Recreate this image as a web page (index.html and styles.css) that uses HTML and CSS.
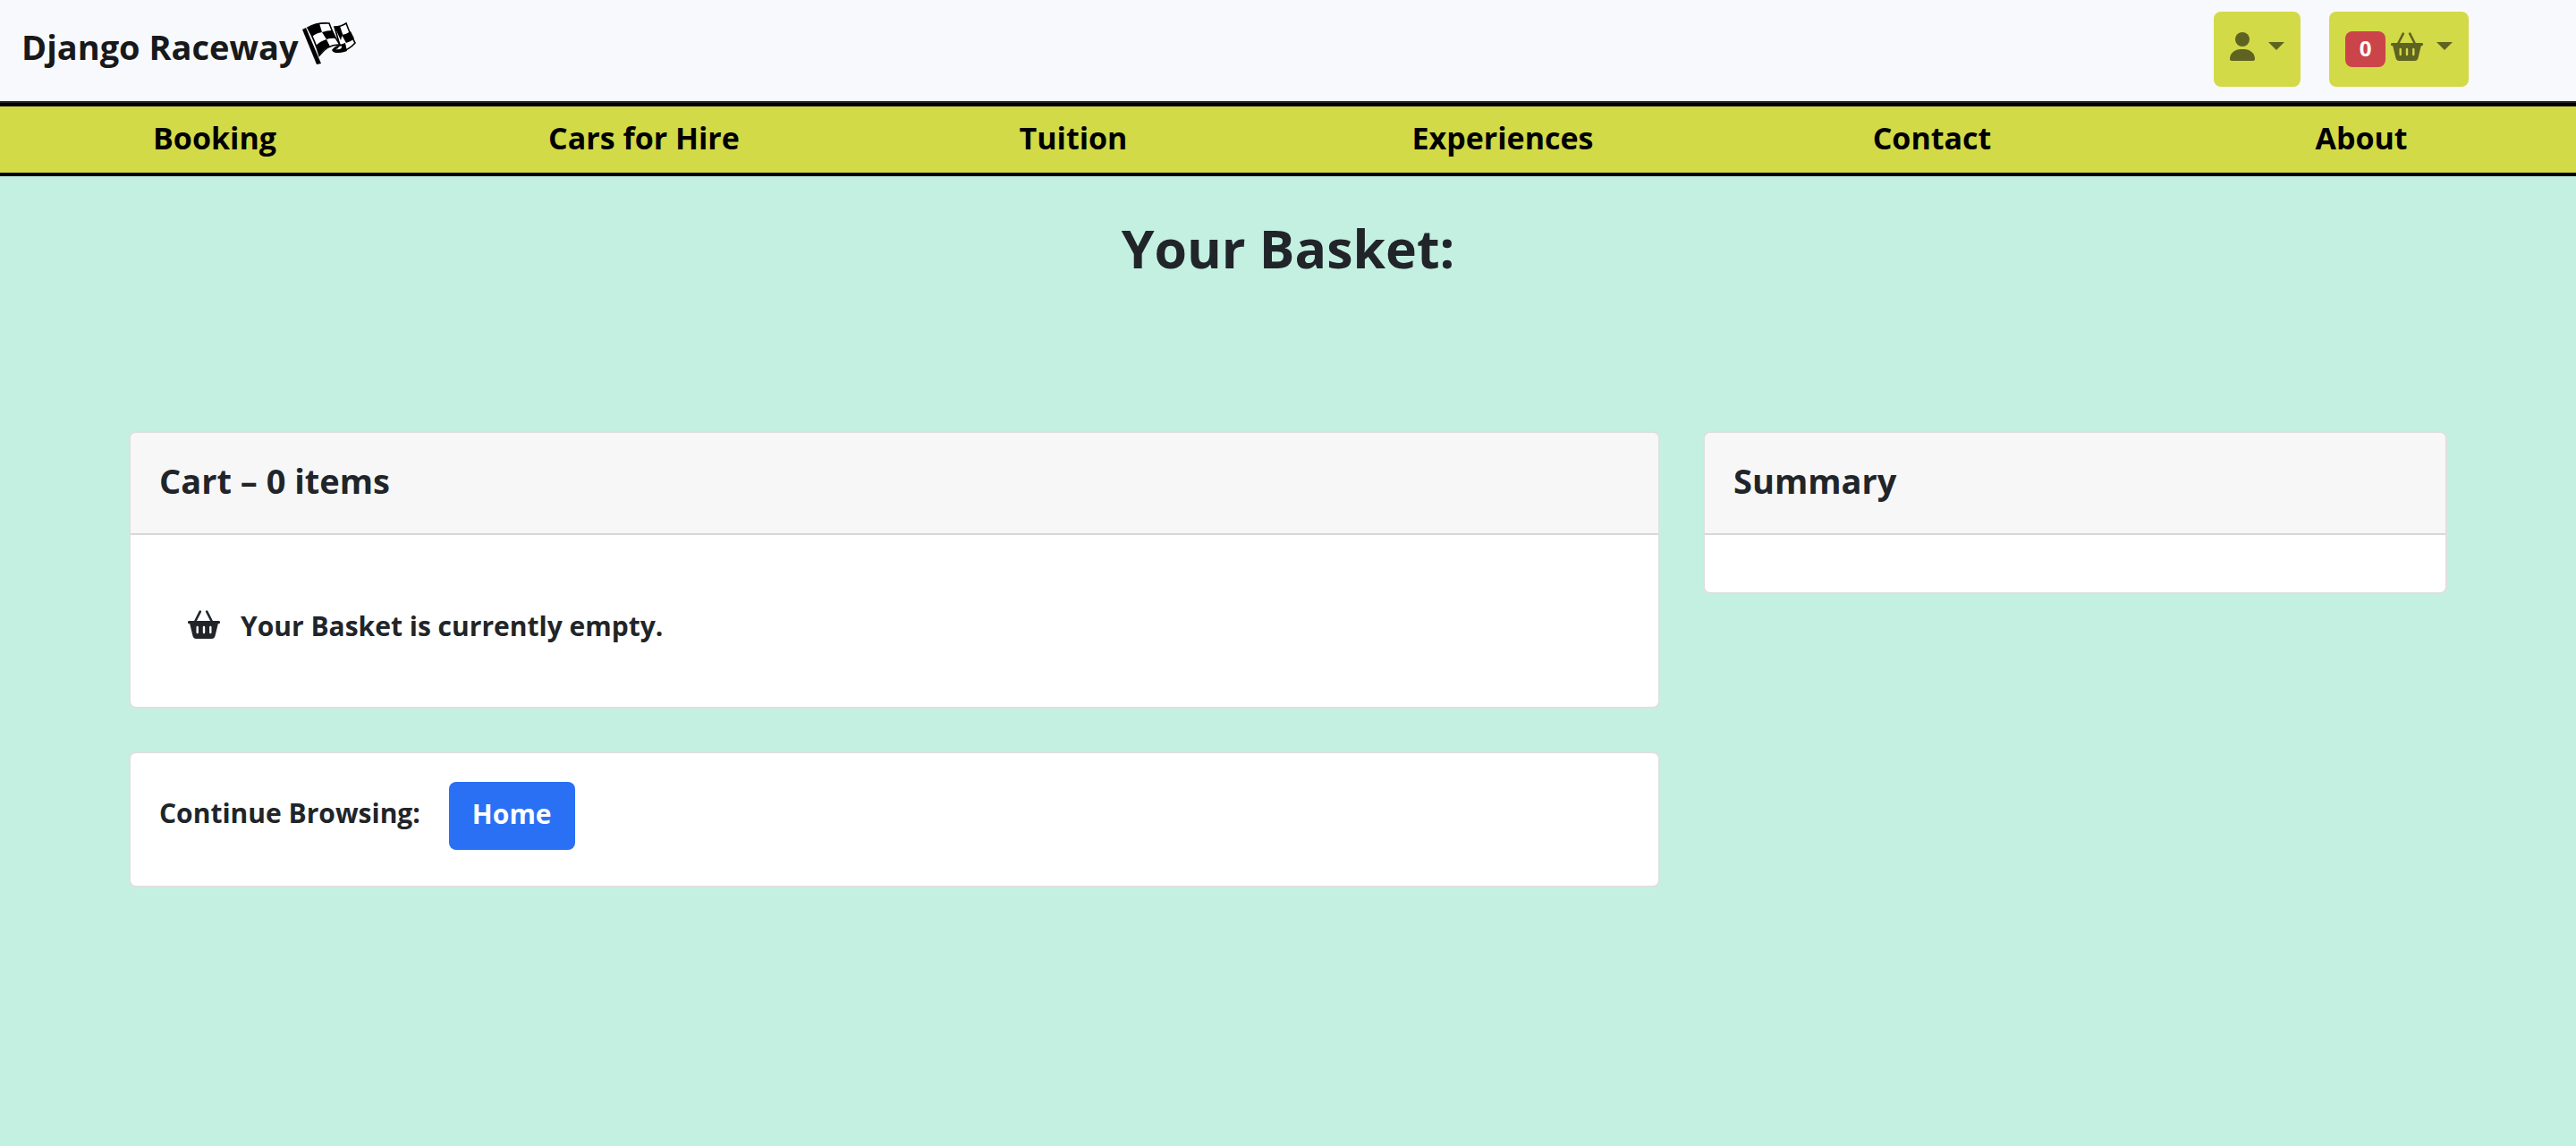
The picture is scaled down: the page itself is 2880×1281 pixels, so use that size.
FILE: index.html
```html
<!DOCTYPE html>
<html lang="en">
<head>
<meta charset="utf-8">
<meta name="viewport" content="width=device-width, initial-scale=1">
<title>Django Raceway</title>
<link rel="stylesheet" href="styles.css">
</head>
<body>
<svg class="sprite" aria-hidden="true">
  <symbol id="basket" viewBox="0 0 36 32">
    <path d="M13.8 1.6 8 13M21.2 1.6 27 13" fill="none" stroke="currentColor" stroke-width="2.6" stroke-linecap="round"/>
    <path fill="currentColor" fill-rule="evenodd" d="M1.5 12h33a1.5 1.5 0 0 1 0 3.2h-.7l-3.2 13.4c-.6 2.4-1.6 3.4-3.8 3.4H9.2c-2.2 0-3.2-1-3.800-3.400L2.200 15.200h-.7a1.500 1.500 0 0 1 0-3.200zM9.500 19v6a1.200 1.200 0 0 0 2.400 0v-6a1.200 1.200 0 0 0-2.400 0zM16.800 19v6a1.200 1.200 0 0 0 2.400 0v-6a1.200 1.200 0 0 0-2.400 0zM24.100 19v6a1.200 1.200 0 0 0 2.400 0v-6a1.200 1.200 0 0 0-2.400 0z"/>
  </symbol>
</svg>
<header class="topbar">
  <a class="brand" href="#">Django Raceway
    <svg class="flag" viewBox="0 0 62 50" aria-hidden="true">
      <path class="cloth" d="M36 5q7 0 13-4 4 12 10 22-7 8-17 10-6 1-8-2 3-4 8-5z"/>
      <path d="M36 5l6-1 3 9-2 7zM44 14q6-1 10-4l4 8q-4 4-9 5zM42 25l6-2 2 9q-9 4-16-1 0-3 7-4-1 3-4 3 7 1 7-3z"/>
      <path class="cloth" d="M6 6Q16 0 30 1q5 14 12 24-13-1-23 12Q14 20 6 6z"/>
      <path d="M6 6Q12 3 19 1l3 10q-7 1-11 5zM22 11q6-2 11-2l5 9q-6-1-11 1zM15 26q5-5 12-7l4 8q-7 2-12 10z"/>
      <path d="M0 8 4 6 21 46l-5 1z"/>
    </svg>
  </a>
  <div class="tools">
    <button class="tool" type="button" aria-label="Account">
      <svg class="person" viewBox="0 0 28 32" aria-hidden="true"><circle cx="14" cy="8" r="8"/><path d="M0 30C0 23 6 19 12 19h4c6 0 12 4 12 11q0 2-2 2H2q-2 0-2-2z"/></svg>
      <span class="caret"></span>
    </button>
    <button class="tool" type="button" aria-label="Basket">
      <span class="badge">0</span>
      <svg class="basket" aria-hidden="true"><use href="#basket"/></svg>
      <span class="caret"></span>
    </button>
  </div>
</header>
<nav class="menu">
  <a href="#">Booking</a>
  <a href="#">Cars for Hire</a>
  <a href="#">Tuition</a>
  <a href="#">Experiences</a>
  <a href="#">Contact</a>
  <a href="#">About</a>
</nav>
<main>
  <h1>Your Basket:</h1>
  <div class="columns">
    <div class="wide">
      <section class="card">
        <h2>Cart – 0 items</h2>
        <p class="empty"><svg class="basket" aria-hidden="true"><use href="#basket"/></svg>Your Basket is currently empty.</p>
      </section>
      <section class="card browse">
        <p>Continue Browsing:</p>
        <a class="home" href="#">Home</a>
      </section>
    </div>
    <section class="card narrow">
      <h2>Summary</h2>
      <div class="summary"></div>
    </section>
  </div>
</main>
</body>
</html>
```
FILE: styles.css
```css
* { box-sizing: border-box; }

body {
  margin: 0;
  min-height: 100vh;
  background: #c4f0e2;
  color: #212529;
  font: 700 30px/44px "Open Sans", "Noto Sans", sans-serif;
}

h1, h2, p { margin: 0; }
a { color: inherit; text-decoration: none; }
.sprite { display: none; }

.topbar {
  display: flex;
  justify-content: space-between;
  align-items: flex-start;
  padding: 13px 120px 16px 24px;
  background: #f8f9fc;
  border-bottom: 2px solid #212529;
}

.brand {
  display: flex;
  gap: 4px;
  padding-top: 12px;
  color: #18191a;
  font-size: 38px;
  line-height: 54px;
}

.flag { width: 62px; height: 50px; }
.flag .cloth { fill: #fff; stroke: #000; stroke-width: 1.6; }

.tools { display: flex; gap: 32px; }

.tool {
  display: flex;
  align-items: flex-start;
  gap: 6px;
  height: 84px;
  padding: 22px 18px;
  border: 0;
  border-radius: 8px;
  background: #d2da48;
  color: #5f6321;
  font: inherit;
}

.badge {
  width: 45px;
  height: 40px;
  border-radius: 8px;
  background: #cb444a;
  color: #fff;
  font-size: 24px;
  line-height: 38px;
  text-align: center;
}

.person { width: 28px; height: 32px; margin-top: 1px; fill: currentColor; }
.basket { width: 36px; height: 32px; margin-top: 1px; }

.caret {
  margin: 12px 0 0 9px;
  border: 9px solid transparent;
  border-top-color: currentColor;
  border-bottom: 0;
}

.menu {
  display: grid;
  grid-template-columns: repeat(6, 1fr);
  padding-bottom: 4px;
  border: solid #000;
  border-width: 4px 0;
  background: #d2da48;
  color: #000;
  font-size: 34px;
  line-height: 70px;
  text-align: center;
}

main { padding: 38px 5%; }

h1 {
  margin-bottom: 163px;
  font-size: 59px;
  line-height: 84px;
  text-align: center;
}

.columns {
  display: grid;
  grid-template-columns: repeat(12, 1fr);
  align-items: start;
  column-gap: 48px;
}

.wide { display: grid; grid-column: span 8; gap: 48px; }
.narrow { grid-column: span 4; }

.card {
  border: 2px solid #dfdfdf;
  border-radius: 8px;
  background: #fff;
  overflow: hidden;
}

h2 {
  padding: 25px 32px 31px;
  border-bottom: 2px solid #d8d8d8;
  background: #f7f7f7;
  font-size: 38px;
  line-height: 56px;
}

.empty { display: flex; gap: 23px; padding: 80px 64px 68px; }
.empty .basket { margin-top: 4px; }
.summary { height: 64px; }

.browse { display: flex; gap: 32px; padding: 32px 32px 40px; }
.browse p { padding-top: 13px; }

.home {
  padding: 14px 26px 18px;
  border-radius: 8px;
  background: #2a70f5;
  color: #fff;
}
```
